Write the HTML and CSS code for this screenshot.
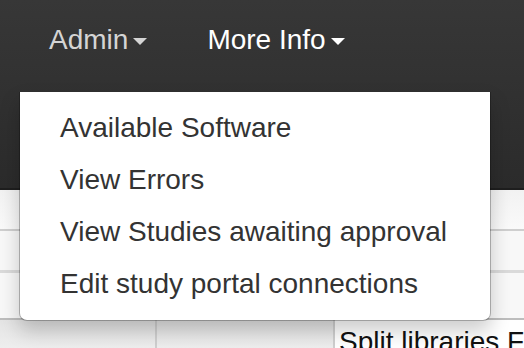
FILE: index.html
```html
<!DOCTYPE html>
<html lang="en">
  <head>
    <meta charset="UTF-8" />
    <title>Admin menu</title>
    <link rel="stylesheet" href="styles.css">
  </head>
  <body>
    <div class="navbar">
      <ul class="nav">
        <li class="nav-item">
          <a href="#">Admin<span class="caret"></span></a>
        </li>
        <li class="nav-item open">
          <a href="#">More Info<span class="caret"></span></a>
        </li>
      </ul>
    </div>

    <div class="content">
      <div class="row row-one"></div>
      <div class="row row-two"></div>
      <div class="row row-three"></div>
      <div class="row head-row">
        <div class="cell cell-a"></div>
        <div class="cell cell-b"></div>
        <div class="cell cell-c">Split libraries F</div>
      </div>
    </div>

    <ul class="dropdown-menu">
      <li><a href="#">Available Software</a></li>
      <li><a href="#">View Errors</a></li>
      <li><a href="#">View Studies awaiting approval</a></li>
      <li><a href="#">Edit study portal connections</a></li>
    </ul>
  </body>
</html>
```

FILE: styles.css
```css
* {
  box-sizing: border-box;
  margin: 0;
  padding: 0;
}

body {
  font-family: "Liberation Sans", Arial, Helvetica, sans-serif;
  font-size: 28px;
  line-height: 40px;
  color: #333;
  background-color: #fff;
  width: 524px;
  height: 348px;
  overflow: hidden;
  position: relative;
}

a {
  text-decoration: none;
}

ul {
  list-style: none;
}

.navbar {
  height: 190px;
  background: linear-gradient(#373737, #2b2b2b);
  border-bottom: 2px solid #1e1e1e;
  padding-top: 20px;
}

.nav {
  display: flex;
  padding-left: 19px;
}

.nav-item a {
  display: flex;
  align-items: center;
  padding: 0 30px;
  color: #d4d4d4;
}

.nav-item.open a {
  color: #fff;
}

.caret {
  display: inline-block;
  width: 0;
  height: 0;
  margin-left: 5px;
  margin-top: 2px;
  border-top: 7px solid #d4d4d4;
  border-left: 7px solid transparent;
  border-right: 7px solid transparent;
}

.nav-item.open .caret {
  border-top-color: #fff;
}

.content {
  background-color: #f8f8f8;
}

.row {
  border-bottom: 2px solid #cfcfcf;
}

.row-one {
  height: 41px;
  background: linear-gradient(#f2f2f2, #fafafa);
}

.row-two {
  height: 42px;
  border-bottom: 3px solid #dadada;
}

.row-three {
  height: 47px;
  border-bottom-color: #bdbdbd;
}

.head-row {
  display: flex;
  height: 40px;
  border-bottom: none;
}

.cell {
  height: 40px;
}

.cell-a {
  width: 157px;
  border-right: 2px solid #cfcfcf;
  background: linear-gradient(#e4e4e4, #f2f2f2);
}

.cell-b {
  width: 178px;
  border-right: 2px solid #cfcfcf;
  background: linear-gradient(#e4e4e4, #f2f2f2);
}

.cell-c {
  flex: 1;
  background-color: #fff;
  color: #111;
  padding-left: 4px;
  padding-top: 2px;
  white-space: nowrap;
  overflow: hidden;
}

.dropdown-menu {
  position: absolute;
  top: 92px;
  left: 19px;
  width: 472px;
  padding: 10px 0;
  background-color: #fff;
  border: 1px solid rgba(0, 0, 0, 0.25);
  border-top: none;
  border-radius: 0 0 8px 8px;
  background-clip: padding-box;
  box-shadow: 0 10px 20px rgba(0, 0, 0, 0.2);
}

.dropdown-menu a {
  display: block;
  padding: 6px 40px;
  color: #333;
  white-space: nowrap;
}
```
